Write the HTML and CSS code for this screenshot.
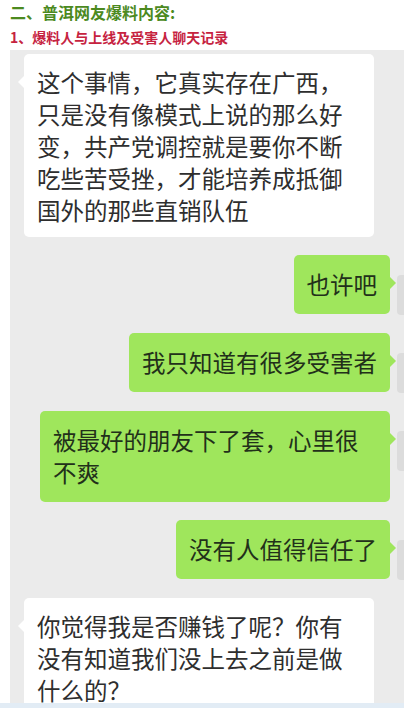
FILE: index.html
```html
<!DOCTYPE html>
<html lang="zh-CN">
  <head>
    <meta charset="UTF-8" />
    <meta name="viewport" content="width=device-width, initial-scale=1.0" />
    <title>普洱网友爆料内容</title>
    <link rel="stylesheet" href="styles.css">
  </head>
  <body>
    <div class="head">
      <h2 class="title">二、普洱网友爆料内容:</h2>
      <h3 class="subTitle">1、爆料人与上线及受害人聊天记录</h3>
    </div>
    <div class="shot">
      <div class="row left">
        <div class="bubble white">这个事情，它真实存在广西，只是没有像模式上说的那么好变，共产党调控就是要你不断吃些苦受挫，才能培养成抵御国外的那些直销队伍</div>
      </div>
      <div class="row right">
        <div class="bubble green">也许吧</div>
        <span class="avatar"></span>
      </div>
      <div class="row right">
        <div class="bubble green">我只知道有很多受害者</div>
        <span class="avatar"></span>
      </div>
      <div class="row right">
        <div class="bubble green">被最好的朋友下了套，心里很不爽</div>
        <span class="avatar"></span>
      </div>
      <div class="row right">
        <div class="bubble green">没有人值得信任了</div>
        <span class="avatar"></span>
      </div>
      <div class="row left">
        <div class="bubble white">你觉得我是否赚钱了呢？你有没有知道我们没上去之前是做什么的？</div>
      </div>
    </div>
    <div class="foot"></div>
  </body>
</html>
```
FILE: styles.css
```css
body,
div,
h2,
h3 {
  margin: 0px;
  padding: 0px;
}
body {
  background: #fff;
  font-family: "Noto Sans CJK SC", "Noto Sans", sans-serif;
}
.head {
  padding-left: 10px;
}
.title {
  height: 24px;
  line-height: 24px;
  font-size: 16px;
  font-weight: bold;
  color: #4c8a1f;
}
.subTitle {
  height: 26px;
  line-height: 26px;
  font-size: 14px;
  font-weight: bold;
  color: #c6233f;
}
.shot {
  display: flex;
  flex-direction: column;
  gap: 18px;
  height: 653px;
  margin-left: 10px;
  padding-top: 4px;
  box-sizing: border-box;
  background-color: #ebebeb;
  overflow: hidden;
}
.row {
  display: flex;
  align-items: flex-start;
}
.left {
  padding-left: 14px;
}
.right {
  justify-content: flex-end;
  gap: 7px;
}
.bubble {
  position: relative;
  max-width: 350px;
  box-sizing: border-box;
  padding: 12px 13px 11px;
  border-radius: 5px;
  font-size: 23.5px;
  line-height: 32px;
  color: #2e2e2e;
}
.white {
  background-color: #fff;
}
.green {
  padding: 13px 13px 14px;
  background-color: #9fe65c;
  color: #22301a;
}
.white::before {
  content: "";
  position: absolute;
  left: -6px;
  top: 22px;
  border-style: solid;
  border-width: 6px 6px 6px 0;
  border-color: transparent #fff transparent transparent;
}
.green::after {
  content: "";
  position: absolute;
  right: -6px;
  top: 22px;
  border-style: solid;
  border-width: 6px 0 6px 6px;
  border-color: transparent transparent transparent #9fe65c;
}
.avatar {
  width: 7px;
  height: 40px;
  margin-top: 20px;
  border-radius: 4px 0 0 4px;
  background-color: #dcdcdc;
}
.foot {
  height: 5px;
  background-color: #e2ecf5;
}
```
